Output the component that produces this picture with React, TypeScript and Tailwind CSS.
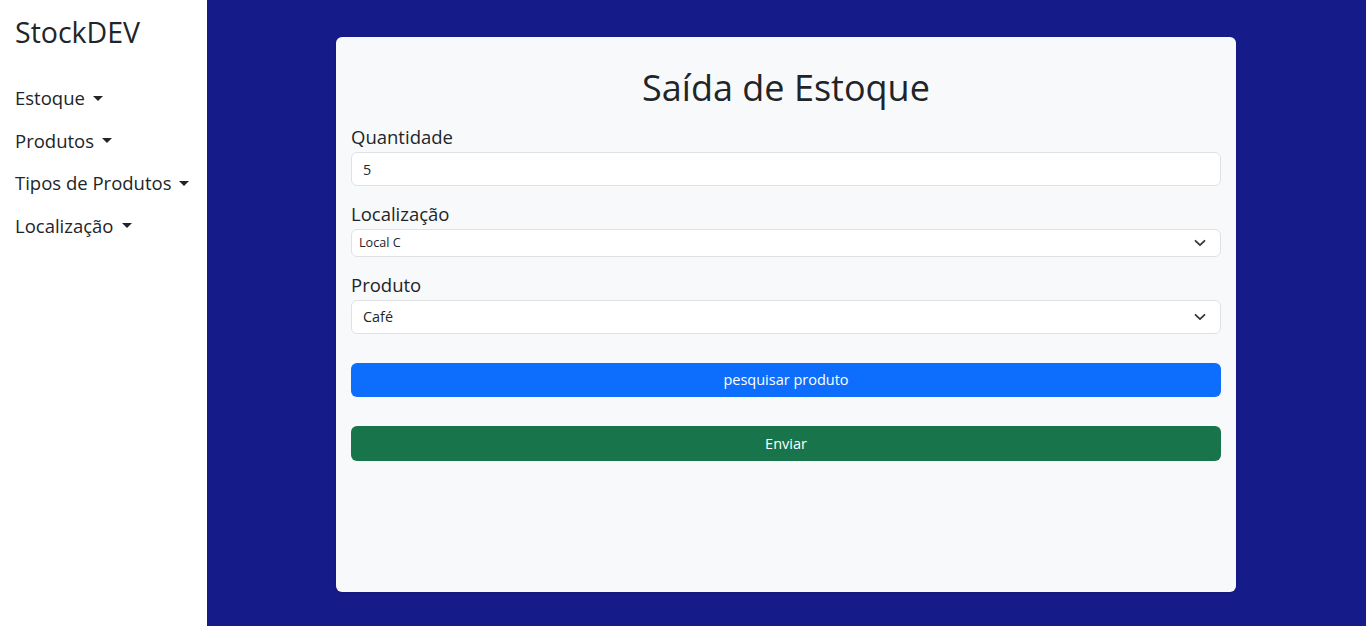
import React from "react";

const navItems = ["Estoque", "Produtos", "Tipos de Produtos", "Localização"];

const Caret = () => (
	<span className="ml-[8px] inline-block h-0 w-0 border-x-[5.5px] border-t-[5.5px] border-x-transparent border-t-[#212529] align-middle" />
);

const Chevron = () => (
	<svg width="12" height="8" viewBox="0 0 12 8" className="shrink-0">
		<path d="M1.5 1.8 6 6.2l4.5-4.4" fill="none" stroke="#343a40" strokeWidth="1.8" strokeLinecap="round" strokeLinejoin="round" />
	</svg>
);

const Sidebar = () => (
	<aside className="w-[207px] shrink-0 bg-white px-[15px] pt-[11px]">
		<div className="text-[28.5px] leading-[42px] text-[#212529]">StockDEV</div>
		<ul className="mt-[24px]">
			{navItems.map((item) => (
				<li key={item} className="flex h-[42.5px] items-center whitespace-nowrap text-[18.5px] leading-[28px] text-[#212529]">
					{item}
					<Caret />
				</li>
			))}
		</ul>
	</aside>
);

const App = () => {
	const [quantidade, setQuantidade] = React.useState("5");

	return (
		<div className="flex h-[626px] w-full font-['Open_Sans',sans-serif] text-[#212529]">
			<Sidebar />
			<main className="flex-1 bg-[#161b8a] pt-[37px]">
				<div className="ml-[129px] h-[555px] w-[900px] rounded-[6px] bg-[#f8f9fa] px-[15px] pt-[27px] shadow-sm">
					<h1 className="text-center text-[36px] leading-[48px]">Saída de Estoque</h1>

					<label className="mt-[10px] block text-[18.5px] leading-[30px]">Quantidade</label>
					<input
						value={quantidade}
						onChange={(e) => setQuantidade(e.target.value)}
						className="block h-[34px] w-full rounded-[6px] border border-[#dee2e6] bg-white px-[11px] text-[14.4px] outline-none"
					/>

					<label className="mt-[13px] block text-[18.5px] leading-[30px]">Localização</label>
					<div className="flex h-[28px] w-full items-center justify-between rounded-[6px] border border-[#dee2e6] bg-white pl-[7px] pr-[14px] text-[12.6px]">
						<span>Local C</span>
						<Chevron />
					</div>

					<label className="mt-[13px] block text-[18.5px] leading-[30px]">Produto</label>
					<div className="flex h-[34px] w-full items-center justify-between rounded-[6px] border border-[#dee2e6] bg-white pl-[11px] pr-[14px] text-[14.4px]">
						<span>Café</span>
						<Chevron />
					</div>

					<button className="mt-[29px] block h-[34px] w-full rounded-[6px] bg-[#0d6efd] text-[14.5px] text-white">
						pesquisar produto
					</button>
					<button className="mt-[29px] block h-[35px] w-full rounded-[6px] bg-[#18744a] text-[14.5px] text-white">
						Enviar
					</button>
				</div>
			</main>
		</div>
	);
};

export default App;
